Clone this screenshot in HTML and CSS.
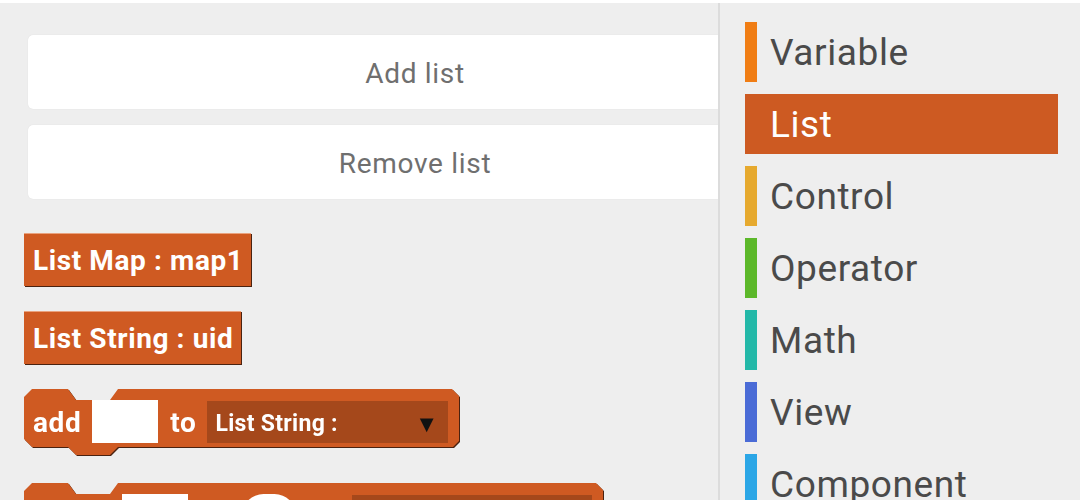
FILE: index.html
```html
<!DOCTYPE html>
<html>
<head>
<meta charset="utf-8">
<link rel="stylesheet" href="styles.css">
</head>
<body>
<div class="app">
  <main class="workspace">
    <div class="card">Add list</div>
    <div class="card">Remove list</div>
    <div class="block-list">
      <div class="block flat map">List Map : map1</div>
      <div class="block flat str">List String : uid</div>
      <div class="stmt-wrap">
        <div class="stmt add">
          <span class="word">add</span>
          <span class="input"></span>
          <span class="word to">to</span>
          <span class="dropdown"><span>List String :</span><span class="arrow">▼</span></span>
        </div>
      </div>
      <div class="stmt-wrap">
        <div class="stmt insert">
          <span class="spacer"></span>
          <span class="input"></span>
          <span class="spacer2"></span>
          <span class="round"></span>
          <span class="spacer3"></span>
          <span class="dropdown"></span>
        </div>
      </div>
    </div>
  </main>
  <aside class="toolbox">
    <div class="cat c-var"><span class="bar"></span><span class="label">Variable</span></div>
    <div class="cat c-list selected"><span class="bar"></span><span class="label">List</span></div>
    <div class="cat c-ctrl"><span class="bar"></span><span class="label">Control</span></div>
    <div class="cat c-op"><span class="bar"></span><span class="label">Operator</span></div>
    <div class="cat c-math"><span class="bar"></span><span class="label">Math</span></div>
    <div class="cat c-view"><span class="bar"></span><span class="label">View</span></div>
    <div class="cat c-comp"><span class="bar"></span><span class="label">Component</span></div>
  </aside>
</div>
</body>
</html>
```

FILE: styles.css
```css
* { box-sizing: border-box; }
html, body { margin: 0; padding: 0; }
body {
  width: 1080px;
  height: 500px;
  overflow: hidden;
  background: #eeeeee;
  font-family: Roboto, "Liberation Sans", sans-serif;
  border-top: 3px solid #ffffff;
}
.app {
  display: flex;
  height: 497px;
}
.workspace {
  width: 718px;
  flex: none;
  overflow: hidden;
  padding: 32px 0 0 24px;
}
.card {
  width: 774px;
  height: 74px;
  margin-left: 4px;
  margin-bottom: 16px;
  background: #ffffff;
  border-radius: 5px;
  box-shadow: 0 0 1px rgba(0,0,0,0.12);
  display: flex;
  align-items: center;
  justify-content: center;
  padding-top: 2px;
  color: #6f6f6f;
  font-size: 28px;
  letter-spacing: 0.7px;
}
.block-list {
  padding-top: 18px;
  display: flex;
  flex-direction: column;
  align-items: flex-start;
}
.block {
  background: #cf5a22;
  color: #ffffff;
  font-weight: 700;
  font-size: 28px;
  letter-spacing: 0.6px;
  height: 53px;
  display: flex;
  align-items: center;
  padding: 1px 8px 0 9px;
  box-shadow: 1px 1px 0 #4a2210;
  border-top: 1px solid #e9a27e;
}
.flat { margin-bottom: 25px; }
.stmt-wrap {
  filter: drop-shadow(1px 1px 0 #4a2210);
  margin-bottom: 28px;
}
.stmt {
  background: #cf5a22;
  color: #ffffff;
  font-weight: 700;
  display: flex;
  align-items: flex-start;
  padding: 11px 11px 12px 9px;
  height: 66px;
  clip-path: polygon(0 8px, 8px 0, 44px 0, 52px 11px, 86px 11px, 94px 0, calc(100% - 7px) 0, 100% 7px, 100% 52px, calc(100% - 6px) 58px, 94px 58px, 86px 66px, 52px 66px, 44px 58px, 8px 58px, 0 50px);
}
.add { width: 435px; }
.insert { width: 579px; }
.word {
  font-size: 28px;
  letter-spacing: 0.6px;
  height: 43px;
  line-height: 45px;
}
.input {
  width: 66px;
  height: 43px;
  background: #ffffff;
  margin: 0 12px 0 11px;
  flex: none;
}
.to { margin-right: 11px; }
.spacer { width: 98px; flex: none; margin-left: -9px; }
.insert .input { margin: 0; }
.spacer2 { width: 54px; flex: none; }
.round {
  width: 54px;
  height: 43px;
  background: #ffffff;
  border-radius: 22px;
  flex: none;
}
.spacer3 { width: 56px; flex: none; }
.dropdown {
  flex: 1;
  height: 42px;
  margin-top: 1px;
  background: #a5481b;
  display: flex;
  align-items: center;
  justify-content: space-between;
  padding: 2px 14px 0 8px;
  font-size: 23px;
  letter-spacing: 0.3px;
}
.arrow {
  color: #111111;
  font-size: 18px;
  font-family: "DejaVu Sans", sans-serif;
}
.toolbox {
  flex: 1;
  border-left: 2px solid #dcdcdc;
  padding: 19px 22px 0 25px;
  display: flex;
  flex-direction: column;
  gap: 12px;
}
.cat {
  height: 60px;
  flex: none;
  display: flex;
  align-items: center;
  color: #4a4a4a;
  font-size: 37px;
  letter-spacing: 0.6px;
}
.bar {
  width: 12px;
  height: 60px;
  margin-right: 13px;
  flex: none;
}
.label { line-height: 60px; padding-top: 2px; }
.c-var .bar { background: #f07d14; }
.c-list .bar { background: #cd5a22; }
.c-ctrl .bar { background: #e6a92e; }
.c-op .bar { background: #5cb82a; }
.c-math .bar { background: #23b8a8; }
.c-view .bar { background: #4a6bd6; }
.c-comp .bar { background: #2ba6e6; }
.selected { background: #cd5a22; color: #ffffff; }
```
